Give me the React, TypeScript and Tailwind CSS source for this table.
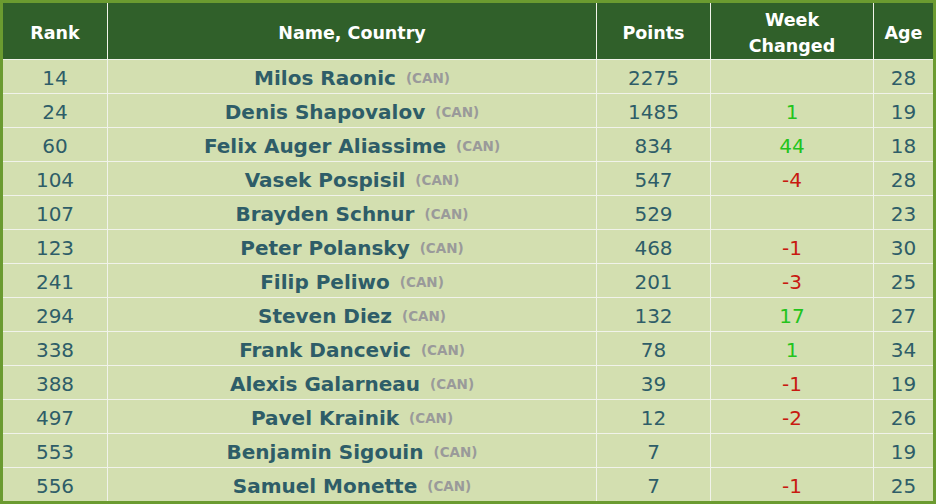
const players: [number, string, number, number | null, number][] = [
  [14, "Milos Raonic", 2275, null, 28],
  [24, "Denis Shapovalov", 1485, 1, 19],
  [60, "Felix Auger Aliassime", 834, 44, 18],
  [104, "Vasek Pospisil", 547, -4, 28],
  [107, "Brayden Schnur", 529, null, 23],
  [123, "Peter Polansky", 468, -1, 30],
  [241, "Filip Peliwo", 201, -3, 25],
  [294, "Steven Diez", 132, 17, 27],
  [338, "Frank Dancevic", 78, 1, 34],
  [388, "Alexis Galarneau", 39, -1, 19],
  [497, "Pavel Krainik", 12, -2, 26],
  [553, "Benjamin Sigouin", 7, null, 19],
  [556, "Samuel Monette", 7, -1, 25],
];

const head = "bg-[#30602a] text-white font-bold text-[17.5px] leading-[26px] pt-[3px] flex items-center justify-center text-center";
const cell = "bg-[#d3dfb0] text-[#2e5d68] text-[20px] leading-[24px] pt-[2px] flex items-center justify-center";

export default function App() {
  return (
    <div
      className="w-[936px] h-[504px] border-[3px] border-[#6b9b30] bg-[#f1f3ea]"
      style={{ fontFamily: '"DejaVu Sans", Verdana, sans-serif' }}
    >
      <div className="grid grid-cols-[104px_488px_113px_162px_59px] grid-rows-[56px_repeat(13,33px)] gap-px">
        <div className={head}>Rank</div>
        <div className={head}>Name, Country</div>
        <div className={head}>Points</div>
        <div className={head}>
          Week
          <br />
          Changed
        </div>
        <div className={head}>Age</div>
        {players.map(([rank, name, pts, chg, age]) => (
          <div key={rank} className="contents">
            <div className={cell}>{rank}</div>
            <div className={cell}>
              <span className="font-bold">{name}</span>
              <span className="ml-[10px] text-[13.5px] font-bold text-[#9a9a9a]">(CAN)</span>
            </div>
            <div className={cell}>{pts}</div>
            <div className={cell}>
              {chg !== null && (
                <span className={chg > 0 ? "text-[#22c41c]" : "text-[#c81a10]"}>{chg}</span>
              )}
            </div>
            <div className={cell}>{age}</div>
          </div>
        ))}
      </div>
    </div>
  );
}
